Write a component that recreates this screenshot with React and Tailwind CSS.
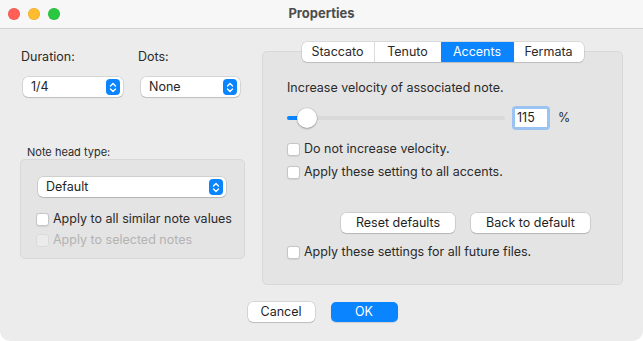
import React from 'react';

const font = { fontFamily: 'Inter, "Liberation Sans", Arial, sans-serif' };

const Stepper = () => (
  <span className="flex h-[16px] w-[14px] items-center justify-center rounded-[4px] bg-[#0a84ff]">
    <svg width="8" height="11" viewBox="0 0 8 11" fill="none" stroke="white" strokeWidth="1.4" strokeLinecap="round" strokeLinejoin="round">
      <path d="M1.5 4 L4 1.5 L6.5 4" />
      <path d="M1.5 7 L4 9.5 L6.5 7" />
    </svg>
  </span>
);

const Select = ({ value, className = '' }) => (
  <div
    className={`flex h-[20px] items-center justify-between rounded-[5px] bg-white pl-[8px] pr-[3px] text-[12.5px] text-[#262626] shadow-[0_0_0_0.5px_rgba(0,0,0,0.18),0_1px_1px_rgba(0,0,0,0.12)] ${className}`}
  >
    <span>{value}</span>
    <Stepper />
  </div>
);

const Checkbox = ({ label, disabled }) => (
  <label className="flex h-[14px] items-center gap-[4px] whitespace-nowrap text-[12.5px]">
    <span
      className={`h-[13px] w-[13px] shrink-0 rounded-[3px] border ${
        disabled ? 'border-[#dadada] bg-[#ebebeb]' : 'border-[#c6c6c6] bg-white shadow-[0_0.5px_1px_rgba(0,0,0,0.08)]'
      }`}
    />
    <span className={disabled ? 'text-[#b3b3b3]' : 'text-[#2a2a2a]'}>{label}</span>
  </label>
);

const Button = ({ children, className = '', primary }) => (
  <button
    className={`flex h-[20px] items-center justify-center rounded-[5px] text-[12.5px] ${
      primary
        ? 'bg-[#0a84ff] text-white shadow-[0_1px_1px_rgba(0,0,0,0.12)]'
        : 'bg-white text-[#1f1f1f] shadow-[0_0_0_0.5px_rgba(0,0,0,0.18),0_1px_1px_rgba(0,0,0,0.12)]'
    } ${className}`}
  >
    {children}
  </button>
);

const tabs = [
  { name: 'Staccato', w: 'w-[73px]' },
  { name: 'Tenuto', w: 'w-[66px]' },
  { name: 'Accents', w: 'w-[73px]', active: true },
  { name: 'Fermata', w: 'w-[70px]' },
];

export default function App() {
  return (
    <div className="h-[341px] w-[643px] bg-white" style={font}>
      <div className="flex h-full w-full flex-col overflow-hidden rounded-b-[10px] bg-[#ececec]">
        {/* title bar */}
        <div className="relative flex h-[29px] shrink-0 items-center justify-center border-b border-[#d3d3d3] bg-[#f7f7f7]">
          <div className="absolute left-[8px] top-[8px] flex gap-[8px]">
            <span className="h-[12px] w-[12px] rounded-full bg-[#ff5f57] shadow-[inset_0_0_0_0.5px_rgba(0,0,0,0.12)]" />
            <span className="h-[12px] w-[12px] rounded-full bg-[#febc2e] shadow-[inset_0_0_0_0.5px_rgba(0,0,0,0.12)]" />
            <span className="h-[12px] w-[12px] rounded-full bg-[#28c840] shadow-[inset_0_0_0_0.5px_rgba(0,0,0,0.12)]" />
          </div>
          <span className="text-[13px] font-bold text-[#4d4d4d]">Properties</span>
        </div>

        <div className="flex px-[20px]">
          {/* left column */}
          <div className="flex w-[225px] flex-col pt-[20px]">
            <div className="flex">
              <div className="flex w-[118px] flex-col">
                <span className="ml-[1px] h-[16px] text-[12.5px] leading-[16px] text-[#2a2a2a]">Duration:</span>
                <Select value="1/4" className="ml-[3px] mt-[12px] w-[100px]" />
              </div>
              <div className="flex flex-col">
                <span className="h-[16px] text-[12.5px] leading-[16px] text-[#2a2a2a]">Dots:</span>
                <Select value="None" className="ml-[3px] mt-[12px] w-[99px]" />
              </div>
            </div>

            <span className="ml-[7px] mt-[49px] h-[13px] text-[11px] leading-[13px] text-[#2a2a2a]">Note head type:</span>
            <div className="flex h-[100px] flex-col rounded-[5px] border border-[#d8d8d8] bg-[#e4e4e4] pl-[15px] pr-[18px] pt-[17px]">
              <Select value="Default" className="ml-[2px]" />
              <div className="mt-[15px] flex flex-col gap-[7px]">
                <Checkbox label="Apply to all similar note values" />
                <Checkbox label="Apply to selected notes" disabled />
              </div>
            </div>
          </div>

          {/* right column */}
          <div className="ml-[17px] flex w-[361px] flex-col pt-[13px]">
            <div className="relative z-10 flex h-[20px] self-center overflow-hidden rounded-[5px] bg-white text-[12.5px] shadow-[0_0_0_0.5px_rgba(0,0,0,0.16),0_1px_1px_rgba(0,0,0,0.1)]">
              {tabs.map((t, i) => (
                <div
                  key={t.name}
                  className={`flex h-full items-center justify-center ${t.w} ${
                    t.active ? 'bg-[#0a84ff] text-white' : 'text-[#2a2a2a]'
                  } ${i === 0 ? 'border-r border-[#dcdcdc]' : ''}`}
                >
                  {t.name}
                </div>
              ))}
            </div>
            <div className="-mt-[11px] flex h-[234px] flex-col rounded-[5px] border border-[#d8d8d8] bg-[#e4e4e4] pl-[24px] pt-[28px]">
              <span className="h-[16px] text-[12.5px] leading-[16px] text-[#2a2a2a]">Increase velocity of associated note.</span>

              <div className="mt-[10px] flex h-[24px] items-center">
                <div className="relative h-[4px] w-[218px] rounded-full bg-[#d9d9d9]">
                  <div className="absolute left-0 top-0 h-[4px] w-[14px] rounded-full bg-[#0a84ff]" />
                  <div className="absolute left-[10px] top-[-8px] h-[20px] w-[20px] rounded-full bg-white shadow-[0_0_0_0.5px_rgba(0,0,0,0.15),0_1px_2px_rgba(0,0,0,0.25)]" />
                </div>
                <div className="ml-[7px] flex h-[24px] w-[38px] items-center rounded-[4px] bg-[#9bc3f2] p-[3px]">
                  <div className="flex h-full w-full items-center bg-white pl-[2px] text-[12.5px] text-[#1f1f1f]">115</div>
                </div>
                <span className="ml-[8px] text-[12.5px] text-[#2a2a2a]">%</span>
              </div>

              <div className="mt-[12px] flex flex-col gap-[9px]">
                <Checkbox label="Do not increase velocity." />
                <Checkbox label="Apply these setting to all accents." />
              </div>

              <div className="ml-[54px] mt-[34px] flex gap-[16px]">
                <Button className="w-[114px]">Reset defaults</Button>
                <Button className="w-[119px]">Back to default</Button>
              </div>

              <div className="mt-[12px]">
                <Checkbox label="Apply these settings for all future files." />
              </div>
            </div>
          </div>
        </div>

        <div className="mt-[17px] flex justify-center gap-[16px] pl-[2px]">
          <Button className="w-[67px]">Cancel</Button>
          <Button primary className="w-[67px]">OK</Button>
        </div>
      </div>
    </div>
  );
}
